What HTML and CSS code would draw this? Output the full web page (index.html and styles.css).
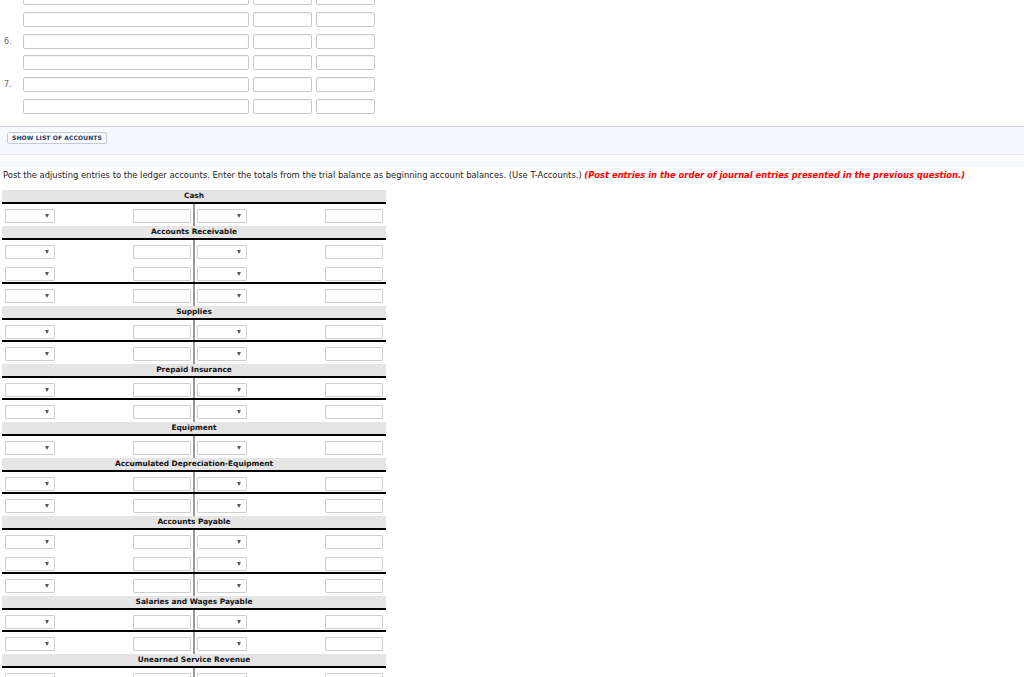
FILE: index.html
```html
<!DOCTYPE html>
<html>
<head>
<meta charset="utf-8">
<link rel="stylesheet" href="styles.css">
</head>
<body>
<div class="journal">
  <div class="jrow"><span class="jlabel"></span><input class="jin wide"><input class="jin amt"><input class="jin amt"></div>
  <div class="jrow"><span class="jlabel"></span><input class="jin wide"><input class="jin amt"><input class="jin amt"></div>
  <div class="jrow"><span class="jlabel">6.</span><input class="jin wide"><input class="jin amt"><input class="jin amt"></div>
  <div class="jrow"><span class="jlabel"></span><input class="jin wide"><input class="jin amt"><input class="jin amt"></div>
  <div class="jrow"><span class="jlabel">7.</span><input class="jin wide"><input class="jin amt"><input class="jin amt"></div>
  <div class="jrow"><span class="jlabel"></span><input class="jin wide"><input class="jin amt"><input class="jin amt"></div>
</div>

<div class="accounts-bar"><span class="btn">SHOW LIST OF ACCOUNTS</span></div>
<div class="strip"></div>

<p class="instr">Post the adjusting entries to the ledger accounts. Enter the totals from the trial balance as beginning account balances. (Use T-Accounts.) <span class="red">(Post entries in the order of journal entries presented in the previous question.)</span></p>

<div class="tlist">
  <div class="thead">Cash</div>
  <div class="trow"><div class="side left"><div class="sel"><span class="caret"></span></div><input class="tin"></div><div class="side right"><div class="sel"><span class="caret"></span></div><input class="tin"></div></div>

  <div class="thead">Accounts Receivable</div>
  <div class="trow"><div class="side left"><div class="sel"><span class="caret"></span></div><input class="tin"></div><div class="side right"><div class="sel"><span class="caret"></span></div><input class="tin"></div></div>
  <div class="trow total"><div class="side left"><div class="sel"><span class="caret"></span></div><input class="tin"></div><div class="side right"><div class="sel"><span class="caret"></span></div><input class="tin"></div></div>
  <div class="trow"><div class="side left"><div class="sel"><span class="caret"></span></div><input class="tin"></div><div class="side right"><div class="sel"><span class="caret"></span></div><input class="tin"></div></div>

  <div class="thead">Supplies</div>
  <div class="trow total"><div class="side left"><div class="sel"><span class="caret"></span></div><input class="tin"></div><div class="side right"><div class="sel"><span class="caret"></span></div><input class="tin"></div></div>
  <div class="trow"><div class="side left"><div class="sel"><span class="caret"></span></div><input class="tin"></div><div class="side right"><div class="sel"><span class="caret"></span></div><input class="tin"></div></div>

  <div class="thead">Prepaid Insurance</div>
  <div class="trow total"><div class="side left"><div class="sel"><span class="caret"></span></div><input class="tin"></div><div class="side right"><div class="sel"><span class="caret"></span></div><input class="tin"></div></div>
  <div class="trow"><div class="side left"><div class="sel"><span class="caret"></span></div><input class="tin"></div><div class="side right"><div class="sel"><span class="caret"></span></div><input class="tin"></div></div>

  <div class="thead">Equipment</div>
  <div class="trow"><div class="side left"><div class="sel"><span class="caret"></span></div><input class="tin"></div><div class="side right"><div class="sel"><span class="caret"></span></div><input class="tin"></div></div>

  <div class="thead">Accumulated Depreciation-Equipment</div>
  <div class="trow total"><div class="side left"><div class="sel"><span class="caret"></span></div><input class="tin"></div><div class="side right"><div class="sel"><span class="caret"></span></div><input class="tin"></div></div>
  <div class="trow"><div class="side left"><div class="sel"><span class="caret"></span></div><input class="tin"></div><div class="side right"><div class="sel"><span class="caret"></span></div><input class="tin"></div></div>

  <div class="thead">Accounts Payable</div>
  <div class="trow"><div class="side left"><div class="sel"><span class="caret"></span></div><input class="tin"></div><div class="side right"><div class="sel"><span class="caret"></span></div><input class="tin"></div></div>
  <div class="trow total"><div class="side left"><div class="sel"><span class="caret"></span></div><input class="tin"></div><div class="side right"><div class="sel"><span class="caret"></span></div><input class="tin"></div></div>
  <div class="trow"><div class="side left"><div class="sel"><span class="caret"></span></div><input class="tin"></div><div class="side right"><div class="sel"><span class="caret"></span></div><input class="tin"></div></div>

  <div class="thead">Salaries and Wages Payable</div>
  <div class="trow total"><div class="side left"><div class="sel"><span class="caret"></span></div><input class="tin"></div><div class="side right"><div class="sel"><span class="caret"></span></div><input class="tin"></div></div>
  <div class="trow"><div class="side left"><div class="sel"><span class="caret"></span></div><input class="tin"></div><div class="side right"><div class="sel"><span class="caret"></span></div><input class="tin"></div></div>

  <div class="thead">Unearned Service Revenue</div>
  <div class="trow total"><div class="side left"><div class="sel"><span class="caret"></span></div><input class="tin"></div><div class="side right"><div class="sel"><span class="caret"></span></div><input class="tin"></div></div>
  <div class="trow"><div class="side left"><div class="sel"><span class="caret"></span></div><input class="tin"></div><div class="side right"><div class="sel"><span class="caret"></span></div><input class="tin"></div></div>
</div>
</body>
</html>
```
FILE: styles.css
```css
html, body {
  margin: 0;
  padding: 0;
  background: #fff;
}
body {
  font-family: "DejaVu Sans", Verdana, sans-serif;
  color: #222;
  overflow: hidden;
}

/* journal rows at top */
.journal {
  margin-top: -10px;
  display: flex;
  flex-direction: column;
  gap: 6.8px;
}
.jrow {
  display: flex;
  align-items: center;
  height: 15px;
}
.jlabel {
  width: 23px;
  padding-left: 4px;
  box-sizing: border-box;
  font-size: 8px;
  color: #666;
}
.jin {
  box-sizing: border-box;
  height: 15px;
  margin: 0;
  padding: 0;
  border: 1px solid #c9c9c9;
  border-radius: 2px;
  background: #fff;
  box-shadow: inset 0 1px 1px rgba(0, 0, 0, 0.05);
}
.jin.wide { width: 226px; }
.jin.amt { width: 59px; margin-left: 4px; }

/* show list of accounts bar */
.accounts-bar {
  margin-top: 12px;
  height: 22px;
  padding: 5px 7px 0;
  box-sizing: content-box;
  background: #f5f8fc;
  border-top: 1px solid #cdd3de;
  border-bottom: 1px solid #e1e5eb;
}
.btn {
  display: block;
  box-sizing: border-box;
  width: 100px;
  height: 12px;
  border: 1px solid #c5cbd5;
  border-radius: 2px;
  background: #f9fafc;
  font-size: 6px;
  font-weight: bold;
  line-height: 10px;
  text-align: center;
  color: #243a63;
  letter-spacing: 0.1px;
}
.strip {
  margin-top: 6px;
  height: 6px;
  background: #f5f8fc;
}

/* instructions */
.instr {
  margin: 2px 0 0 3px;
  font-size: 8.4px;
  line-height: 12px;
  color: #222;
  white-space: nowrap;
}
.red {
  color: #f00;
  font-weight: bold;
  font-style: italic;
}

/* T-accounts */
.tlist {
  margin: 9px 0 0 2px;
  width: 384px;
}
.thead {
  height: 12px;
  background: #e5e5e5;
  border-bottom: 2px solid #000;
  text-align: center;
  font-weight: bold;
  font-size: 7.4px;
  line-height: 12px;
  color: #111;
}
.trow {
  display: flex;
  height: 22px;
  box-sizing: border-box;
}
.trow.total {
  border-bottom: 2px solid #000;
}
.side {
  display: flex;
  justify-content: space-between;
  align-items: flex-start;
  box-sizing: border-box;
  padding-top: 5px;
}
.side.left {
  width: 193px;
  padding-left: 3px;
  padding-right: 2px;
  border-right: 2px solid #9a9a9a;
}
.side.right {
  width: 191px;
  padding-left: 2px;
  padding-right: 3px;
}
.sel {
  box-sizing: border-box;
  width: 50px;
  height: 14px;
  border: 1px solid #cfcfcf;
  border-radius: 1px;
  background: #fff;
  display: flex;
  justify-content: flex-end;
  align-items: center;
  padding-right: 5px;
}
.caret {
  width: 0;
  height: 0;
  border-left: 2.5px solid transparent;
  border-right: 2.5px solid transparent;
  border-top: 4px solid #555;
}
.tin {
  box-sizing: border-box;
  width: 58px;
  height: 14px;
  margin: 0;
  padding: 0;
  border: 1px solid #cfcfcf;
  border-radius: 1px;
  background: #fff;
}
```
